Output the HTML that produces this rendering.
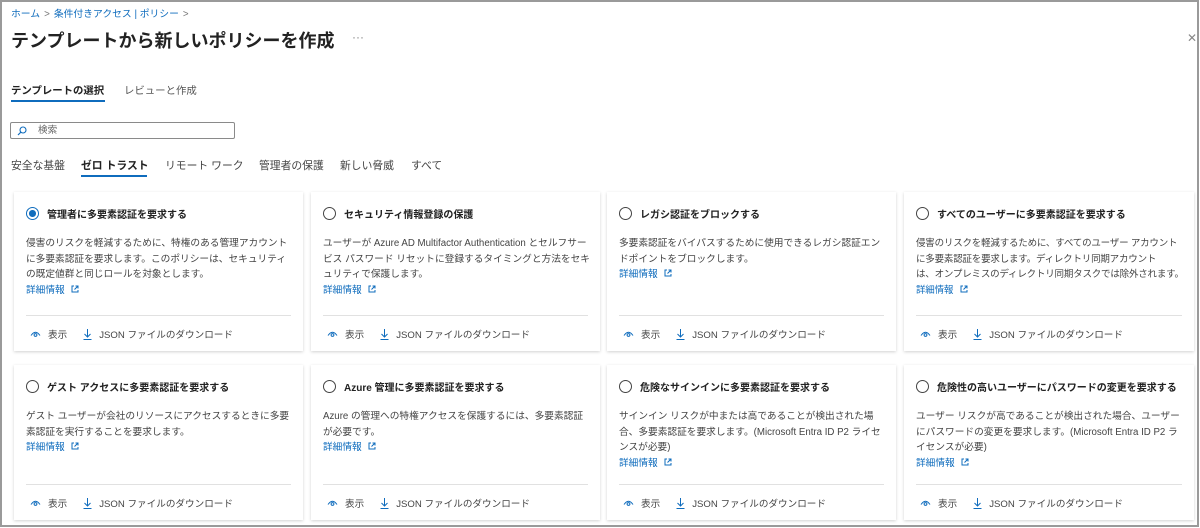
<!DOCTYPE html>
<html><head><meta charset="utf-8"><style>
*{box-sizing:border-box;margin:0;padding:0}
body{width:1200px;height:528px;overflow:hidden;background:#fff;font-family:"Liberation Sans","Noto Sans CJK JP",sans-serif;color:#323130;position:relative}
.frame{position:absolute;left:0;top:0;width:1199px;height:527px;border:2px solid #9a9a9a}
.abs{position:absolute;white-space:nowrap}
.bc{left:11px;top:6px;font-size:9.8px;color:#0f6cbd}
.bc span{color:#777;margin:0 4px}
.title{left:11px;top:27px;font-size:18px;font-weight:bold;color:#222}
.dots{left:352px;top:30px;font-size:12px;color:#888}
.close{left:1187px;top:31px;font-size:12px;color:#888}
.tab{top:82px;font-size:10.4px}
.search{left:10px;top:122px;width:225px;height:17px;border:1px solid #8a8a8a;border-radius:2px;font-size:9.6px;color:#666;padding-left:27px;line-height:15px}
.pill{top:157px;font-size:10.8px;color:#444}
.ul{position:absolute;height:2px;background:#0f6cbd}
.card{position:absolute;background:#fff;box-shadow:0 1px 3px rgba(0,0,0,.18);}
.ct{position:absolute;left:12px;top:14px;font-size:10px;font-weight:bold;color:#222;display:flex;align-items:center;white-space:nowrap}
.rad{width:13px;height:13px;border:1.3px solid #444;border-radius:50%;margin-right:8px;position:relative}
.rad.on{border-color:#0f6cbd}
.rad.on:after{content:"";position:absolute;left:2px;top:2px;width:6.5px;height:6.5px;background:#0f6cbd;border-radius:50%}
.cd{position:absolute;left:12px;top:44px;width:267px;font-size:9.7px;line-height:15.5px;color:#444}
.cd.w{width:272px;font-size:9.5px;letter-spacing:-0.2px;white-space:nowrap}
.cd a{color:#0f6cbd;text-decoration:none;display:block}
.sep{position:absolute;left:12px;right:12px;height:1px;background:#e1e1e1}
.ft{position:absolute;left:16px;font-size:9.6px;color:#444;white-space:nowrap;display:flex;align-items:center}
.ft svg{margin-right:7px}
</style></head><body>
<div class="frame"></div>
<div class="abs bc">ホーム<span>&gt;</span>条件付きアクセス | ポリシー<span>&gt;</span></div>
<div class="abs title">テンプレートから新しいポリシーを作成</div>
<div class="abs dots">···</div>
<div class="abs close">✕</div>
<div class="abs tab" style="left:11px;font-weight:bold;color:#222">テンプレートの選択</div>
<div class="ul" style="left:11px;top:100px;width:94px"></div>
<div class="abs tab" style="left:124px;color:#555">レビューと作成</div>
<div class="abs search">検索
<svg style="position:absolute;left:6px;top:3px" width="10" height="10" viewBox="0 0 10 10"><circle cx="6" cy="4" r="3" fill="none" stroke="#0f6cbd" stroke-width="1.1"/><path d="M4 6L1 9" stroke="#0f6cbd" stroke-width="1.2"/></svg></div>
<div class="abs pill" style="left:11px">安全な基盤</div>
<div class="abs pill" style="left:81px;font-weight:bold;color:#222">ゼロ トラスト</div>
<div class="ul" style="left:81px;top:175px;width:66px"></div>
<div class="abs pill" style="left:165px">リモート ワーク</div>
<div class="abs pill" style="left:259px">管理者の保護</div>
<div class="abs pill" style="left:340px">新しい脅威</div>
<div class="abs pill" style="left:411px">すべて</div>

<div id="cards"></div>
<script>
const eye='<svg width="11" height="8" viewBox="0 0 11 8"><path d="M1 5.5Q5.5 -1 10 5.5" fill="none" stroke="#0f6cbd" stroke-width="1"/><circle cx="5.5" cy="5" r="1.4" fill="none" stroke="#0f6cbd" stroke-width="1"/></svg>';
const dl='<svg width="9" height="11" viewBox="0 0 9 11"><path d="M4.5 0V8M1.5 5L4.5 8L7.5 5M0.5 10.5H8.5" fill="none" stroke="#0f6cbd" stroke-width="1"/></svg>';
const ext=' <svg width="8" height="8" viewBox="0 0 8 8" style="margin-left:4px"><path d="M3 1H1V7H7V5M4.5 1H7V3.5M7 1L3.5 4.5" fill="none" stroke="#0f6cbd" stroke-width="1"/></svg>';
const data=[
["管理者に多要素認証を要求する","侵害のリスクを軽減するために、特権のある管理アカウント<br>に多要素認証を要求します。このポリシーは、セキュリティの既定値群と同じロールを対象とします。",1],
["セキュリティ情報登録の保護","ユーザーが Azure AD Multifactor Authentication とセルフサービス パスワード リセットに登録するタイミングと方法をセキュリティで保護します。",0],
["レガシ認証をブロックする","多要素認証をバイパスするために使用できるレガシ認証エンドポイントをブロックします。",0],
["すべてのユーザーに多要素認証を要求する","侵害のリスクを軽減するために、すべてのユーザー アカウント<br>に多要素認証を要求します。ディレクトリ同期アカウント<br>は、オンプレミスのディレクトリ同期タスクでは除外されます。",0,1],
["ゲスト アクセスに多要素認証を要求する","ゲスト ユーザーが会社のリソースにアクセスするときに多要素認証を実行することを要求します。",0],
["Azure 管理に多要素認証を要求する","Azure の管理への特権アクセスを保護するには、多要素認証が必要です。",0],
["危険なサインインに多要素認証を要求する","サインイン リスクが中または高であることが検出された場合、多要素認証を要求します。(Microsoft Entra ID P2 ライセンスが必要)",0],
["危険性の高いユーザーにパスワードの変更を要求する","ユーザー リスクが高であることが検出された場合、ユーザーにパスワードの変更を要求します。(Microsoft Entra ID P2 ライセンスが必要)",0]];
const xs=[14,311,607,904],ys=[192,365];let h='';
data.forEach((d,i)=>{const x=xs[i%4],y=ys[i>>2],hh=i<4?159:155;
h+=`<div class="card" style="left:${x}px;top:${y}px;width:${x==904?290:289}px;height:${hh}px">
<div class="ct"><div class="rad${d[2]?' on':''}"></div>${d[0]}</div>
<div class="cd${d[3]?' w':''}">${d[1]}<a>詳細情報${ext}</a></div>
<div class="sep" style="top:${hh-36}px"></div>
<div class="ft" style="top:${hh-24}px">${eye}表示<span style="width:16px"></span>${dl}JSON ファイルのダウンロード</div></div>`;});
document.getElementById('cards').innerHTML=h;
</script>
</body></html>
